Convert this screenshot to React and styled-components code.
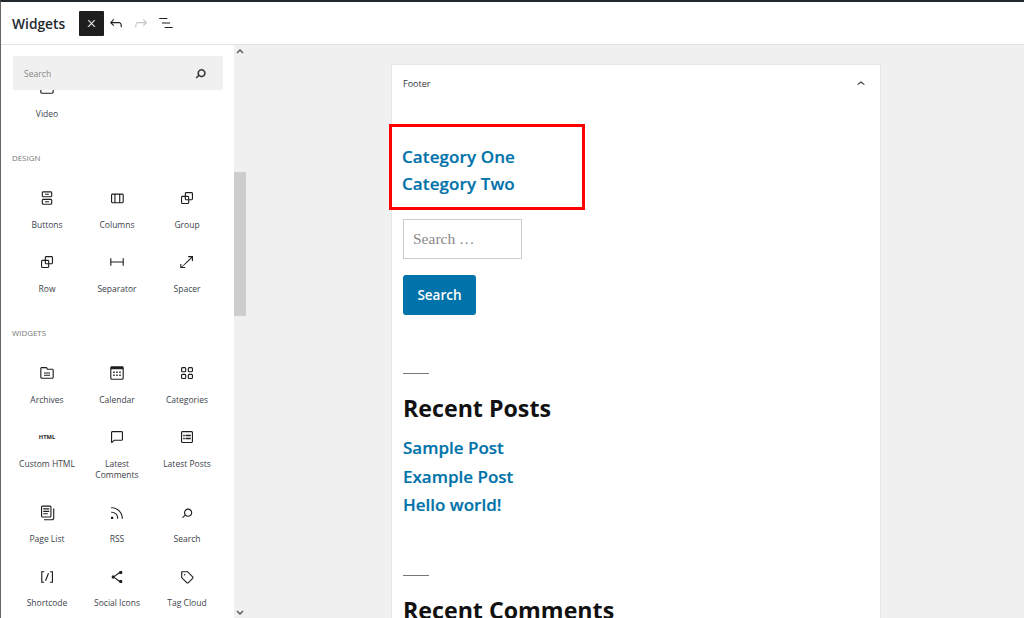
import React from "react";
import styled, { createGlobalStyle } from "styled-components";

const Global = createGlobalStyle`
  html, body { margin: 0; padding: 0; background: #fff; }
  body { font-family: "Open Sans", "Noto Sans", sans-serif; }
  * { box-sizing: border-box; }
`;

const Page = styled.div`
  position: relative;
  width: 1024px;
  height: 618px;
  overflow: hidden;
  display: flex;
  flex-direction: column;
  border-top: 2px solid #23282d;
  border-left: 1px solid #666;
  background: #fff;
  color: #1e1e1e;
`;
const EdgeMark = styled.div`
  position: absolute;
  left: -1px;
  top: ${(p) => p.$top}px;
  width: 1px;
  height: ${(p) => p.$h}px;
  background: #4aa3df;
`;
const Header = styled.header`
  flex: none;
  height: 43px;
  display: flex;
  align-items: center;
  padding-left: 11px;
  border-bottom: 1px solid #e4e4e4;
`;
const Title = styled.h1`
  margin: 0 27px 0 0;
  width: 40px;
  white-space: nowrap;
  font-size: 13.8px;
  font-weight: 600;
  color: #23282d;
`;
const CloseBtn = styled.button`
  width: 25px;
  height: 25px;
  margin-right: -1px;
  padding: 0;
  border: 0;
  border-radius: 1px;
  background: #1e1e1e;
  color: #fff;
  display: flex;
  align-items: center;
  justify-content: center;
  svg { stroke: currentColor; stroke-width: 1; }
`;
const ToolBtn = styled.button`
  width: 25px;
  height: 25px;
  padding: 0;
  border: 0;
  background: none;
  color: ${(p) => (p.$off ? "#c4c4c4" : "#1e1e1e")};
  display: flex;
  align-items: center;
  justify-content: center;
`;
const Body = styled.div`
  flex: 1;
  min-height: 0;
  display: flex;
`;
const Sidebar = styled.aside`
  flex: none;
  width: 233px;
  display: flex;
  flex-direction: column;
`;
const SearchWrap = styled.div`
  flex: none;
  padding: 11px 11px 0 12px;
`;
const SearchBox = styled.div`
  height: 34px;
  background: #f0f0f0;
  display: flex;
  align-items: center;
  justify-content: space-between;
  padding: 1px 14px 0 11px;
  font-size: 8.6px;
  color: #888;
  border-radius: 1px;
  svg { color: #1e1e1e; stroke: currentColor; stroke-width: 0.5; margin-top: -1px; }
`;
const ListClip = styled.div`
  flex: 1;
  min-height: 0;
  overflow: hidden;
`;
const List = styled.div`
  margin-top: -12px;
  padding: 0 11px;
`;
const Section = styled.section`
  margin-top: 33.5px;
`;
const SectionTitle = styled.h2`
  margin: 0 0 25.5px;
  height: 11px;
  line-height: 11px;
  font-size: 7.9px;
  font-weight: 400;
  color: #777;
  text-transform: uppercase;
`;
const Grid = styled.div`
  display: grid;
  grid-template-columns: repeat(3, 70px);
  row-gap: 23px;
`;
const Item = styled.div`
  width: 70px;
  display: flex;
  flex-direction: column;
  align-items: center;
  text-align: center;
`;
const IconBox = styled.div`
  width: 18px;
  height: 18px;
  margin-bottom: 11.5px;
  color: #1e1e1e;
  display: flex;
  align-items: center;
  justify-content: center;
`;
const HtmlTag = styled.span`
  font-size: 5.8px;
  font-weight: 700;
  line-height: 18px;
`;
const Label = styled.span`
  max-width: 58px;
  font-size: 8.5px;
  line-height: 11.5px;
  color: #3c434a;
`;
const Scrollbar = styled.div`
  flex: none;
  width: 12px;
  background: #f0f0f0;
  display: flex;
  flex-direction: column;
  align-items: center;
  color: #555;
`;
const ScrollArrow = styled.div`
  flex: none;
  height: 12px;
  width: 12px;
  display: flex;
  align-items: center;
  justify-content: center;
`;
const ScrollTrack = styled.div`
  flex: 1;
  width: 100%;
  padding-top: 115px;
`;
const ScrollThumb = styled.div`
  height: 144px;
  background: #cdcdcd;
`;
const Main = styled.main`
  flex: 1;
  min-width: 0;
  background: #f0f0f0;
  padding: 19px 0 0 145px;
  overflow: hidden;
`;
const Card = styled.div`
  width: 490px;
  min-height: 700px;
  background: #fff;
  border: 1px solid #e8e8e8;
  padding: 0 10px 0 11px;
`;
const CardHead = styled.div`
  height: 37px;
  display: flex;
  align-items: center;
  justify-content: space-between;
  padding-right: 1px;
  font-size: 9px;
  color: #333;
`;
const Highlight = styled.div`
  width: 196px;
  height: 86px;
  margin: 22px 0 9px -14px;
  padding: 16px 0 0 10px;
  border: 3px solid #f00;
`;
const BlockLink = styled.a`
  display: block;
  font-size: 17px;
  letter-spacing: ${(p) => p.$ls || 0}px;
  line-height: ${(p) => p.$lh || 27}px;
  font-weight: 600;
  -webkit-text-stroke: 0.2px #0073aa;
  color: #0073aa;
  text-decoration: none;
  white-space: nowrap;
`;
const SearchInput = styled.div`
  width: 119px;
  height: 40px;
  padding-left: 9px;
  border: 1px solid #ccc;
  font-family: "Liberation Serif", serif;
  font-size: 15.5px;
  line-height: 38px;
  color: #888;
`;
const SearchBtn = styled.button`
  display: block;
  width: 73px;
  height: 40px;
  margin-top: 16px;
  padding: 0;
  border: 0;
  border-radius: 3px;
  background: #0073aa;
  color: #fff;
  font-family: inherit;
  font-size: 13.5px;
  font-weight: 600;
`;
const Divider = styled.hr`
  width: 26px;
  height: 1px;
  margin: ${(p) => p.$mt}px 0 0;
  border: 0;
  background: #767676;
`;
const WidgetTitle = styled.h2`
  margin: 19px 0 11px;
  font-size: 23.2px;
  line-height: 30px;
  font-weight: 700;
  color: #111;
  white-space: nowrap;
`;

const Ico = ({ d, size = 18, rule }) => (
  <svg width={size} height={size} viewBox="0 0 24 24" fill="currentColor" aria-hidden="true">
    <path d={d} fillRule={rule} />
  </svg>
);
const P = {
  close: "M13 11.8l6.1-6.3-1-1-6.1 6.2-6.1-6.2-1 1 6.1 6.3-6.5 6.7 1 1 6.5-6.6 6.5 6.6 1-1z",
  undo: "M18.3 11.7c-.6-.6-1.4-.9-2.3-.9H6.7l2.9-3.3-1.1-1-4.5 5L8.5 16l1-1-2.7-2.7H16c.5 0 .9.2 1.3.5 1 1 1 3.4 1 4.5v.3h1.5v-.2c0-1.5 0-4.3-1.5-5.7z",
  redo: "M15.6 6.5l-1.1 1 2.9 3.3H8c-.9 0-1.7.3-2.3.9-1.4 1.5-1.4 4.2-1.4 5.6v.2h1.5v-.3c0-1.1 0-3.5 1-4.5.3-.3.7-.5 1.3-.5h9.2L14.5 15l1.1 1.1 4.6-4.6-4.6-5z",
  list: "M13.8 5.2H3v1.5h10.8V5.2zm-3.6 12v1.5H21v-1.5H10.2zm7.2-6H6.6v1.5h10.8v-1.5z",
  search: "M13.5 6C10.5 6 8 8.5 8 11.5c0 1.1.3 2.1.9 3l-3.4 3 1 1.1 3.4-2.9c1 .9 2.2 1.4 3.6 1.4 3 0 5.5-2.5 5.5-5.5C19 8.5 16.5 6 13.5 6zm0 9.5c-2.2 0-4-1.8-4-4s1.8-4 4-4 4 1.8 4 4-1.8 4-4 4z",
  chevronUp: "M6.5 12.4L12 8l5.5 4.4-.9 1.2L12 10l-4.5 3.6-1-1.2z",
  video: "M18.7 3H5.3C4 3 3 4 3 5.3v13.4C3 20 4 21 5.3 21h13.4c1.3 0 2.3-1 2.3-2.3V5.3C21 4 20 3 18.7 3zm.8 15.7c0 .4-.4.8-.8.8H5.3c-.4 0-.8-.4-.8-.8V5.3c0-.4.4-.8.8-.8h13.4c.4 0 .8.4.8.8v13.4zM10 15l5-3-5-3v6z",
  buttons: "M17 3H7c-1.1 0-2 .9-2 2v4c0 1.1.9 2 2 2h10c1.1 0 2-.9 2-2V5c0-1.1-.9-2-2-2zm.5 6c0 .3-.2.5-.5.5H7c-.3 0-.5-.2-.5-.5V5c0-.3.2-.5.5-.5h10c.3 0 .5.2.5.5v4zm-8-1.2h5V6.2h-5v1.6zM17 13H7c-1.1 0-2 .9-2 2v4c0 1.1.9 2 2 2h10c1.1 0 2-.9 2-2v-4c0-1.1-.9-2-2-2zm.5 6c0 .3-.2.5-.5.5H7c-.3 0-.5-.2-.5-.5v-4c0-.3.2-.5.5-.5h10c.3 0 .5.2.5.5v4zm-8-1.2h5v-1.5h-5v1.5z",
  columns: "M19 6H6c-1.1 0-2 .9-2 2v9c0 1.1.9 2 2 2h13c1.1 0 2-.9 2-2V8c0-1.1-.9-2-2-2zm-4.1 1.5v10H10v-10h4.9zM5.5 17V8c0-.3.2-.5.5-.5h2.5v10H6c-.3 0-.5-.2-.5-.5zm14 0c0 .3-.2.5-.5.5h-2.6v-10H19c.3 0 .5.2.5.5v9z",
  group: "M18 4h-7c-1.1 0-2 .9-2 2v3H6c-1.1 0-2 .9-2 2v7c0 1.1.9 2 2 2h7c1.1 0 2-.9 2-2v-3h3c1.1 0 2-.9 2-2V6c0-1.1-.9-2-2-2zm-4.5 14c0 .3-.2.5-.5.5H6c-.3 0-.5-.2-.5-.5v-7c0-.3.2-.5.5-.5h3V13c0 1.1.9 2 2 2h2.5v3zm0-4.5H11c-.3 0-.5-.2-.5-.5v-2.5H13c.3 0 .5.2.5.5v2.5zm5-.5c0 .3-.2.5-.5.5h-3V11c0-1.1-.9-2-2-2h-2.5V6c0-.3.2-.5.5-.5h7c.3 0 .5.2.5.5v7z",
  separator: "M3 7v10h1.5v-4.25h15V17H21V7h-1.5v4.25h-15V7H3z",
  spacer: "M13.5 4v1.5h4L11 12l1 1 6.5-6.5v4H20V4h-6.5zM12 13l-1-1-6.5 6.5v-4H3V20h6.5v-1.5h-4L12 13z",
  archive: "M19 6.2h-5.9l-.6-1.1c-.3-.7-1-1.1-1.8-1.1H5c-1.1 0-2 .9-2 2v11.8c0 1.1.9 2 2 2h14c1.1 0 2-.9 2-2V8.2c0-1.1-.9-2-2-2zm.5 11.6c0 .3-.2.5-.5.5H5c-.3 0-.5-.2-.5-.5V6c0-.3.2-.5.5-.5h5.6c.2 0 .4.1.4.3l1 2H19c.3 0 .5.2.5.5v9.5zM8 12.8h8v-1.5H8v1.5zm0 3h8v-1.5H8v1.5z",
  calendar: "M19 3H5c-1.1 0-2 .9-2 2v14c0 1.1.9 2 2 2h14c1.1 0 2-.9 2-2V5c0-1.1-.9-2-2-2zm.5 16c0 .3-.2.5-.5.5H5c-.3 0-.5-.2-.5-.5V7h15v12zM9 10H7v2h2v-2zm0 4H7v2h2v-2zm4-4h-2v2h2v-2zm4 0h-2v2h2v-2zm-4 4h-2v2h2v-2zm4 0h-2v2h2v-2z",
  categories: "M6 5.5h3a.5.5 0 01.5.5v3a.5.5 0 01-.5.5H6a.5.5 0 01-.5-.5V6a.5.5 0 01.5-.5zM4 6a2 2 0 012-2h3a2 2 0 012 2v3a2 2 0 01-2 2H6a2 2 0 01-2-2V6zm11-.5h3a.5.5 0 01.5.5v3a.5.5 0 01-.5.5h-3a.5.5 0 01-.5-.5V6a.5.5 0 01.5-.5zM13 6a2 2 0 012-2h3a2 2 0 012 2v3a2 2 0 01-2 2h-3a2 2 0 01-2-2V6zm5 8.5h-3a.5.5 0 00-.5.5v3a.5.5 0 00.5.5h3a.5.5 0 00.5-.5v-3a.5.5 0 00-.5-.5zM15 13a2 2 0 00-2 2v3a2 2 0 002 2h3a2 2 0 002-2v-3a2 2 0 00-2-2h-3zm-9 1.5h3a.5.5 0 01.5.5v3a.5.5 0 01-.5.5H6a.5.5 0 01-.5-.5v-3a.5.5 0 01.5-.5zM4 15a2 2 0 012-2h3a2 2 0 012 2v3a2 2 0 01-2 2H6a2 2 0 01-2-2v-3z",
  comment: "M18 4H6c-1.1 0-2 .9-2 2v12.9c0 .6.5 1.1 1.1 1.1.3 0 .5-.1.8-.3L8.5 17H18c1.1 0 2-.9 2-2V6c0-1.1-.9-2-2-2zm.5 11c0 .3-.2.5-.5.5H7.9l-2.4 2.4V6c0-.3.2-.5.5-.5h12c.3 0 .5.2.5.5v9z",
  postList: "M18 4H6c-1.1 0-2 .9-2 2v12c0 1.1.9 2 2 2h12c1.1 0 2-.9 2-2V6c0-1.1-.9-2-2-2zm.5 14c0 .3-.2.5-.5.5H6c-.3 0-.5-.2-.5-.5V6c0-.3.2-.5.5-.5h12c.3 0 .5.2.5.5v12zM7 11h2V9H7v2zm0 4h2v-2H7v2zm3-4h7V9h-7v2zm0 4h7v-2h-7v2z",
  pages: "M7 13.8h6v-1.5H7v1.5zM18 16V4c0-1.1-.9-2-2-2H6c-1.1 0-2 .9-2 2v12c0 1.1.9 2 2 2h10c1.1 0 2-.9 2-2zM5.5 16V4c0-.3.2-.5.5-.5h10c.3 0 .5.2.5.5v12c0 .3-.2.5-.5.5H6c-.3 0-.5-.2-.5-.5zM7 10.5h8V9H7v1.5zm0-3.3h8V5.8H7v1.4zM20.2 6v13c0 .7-.6 1.2-1.2 1.2H8v1.5h11c1.5 0 2.7-1.2 2.7-2.8V6h-1.5z",
  rss: "M5 10.2h-.8v1.5H5c1.9 0 3.8.8 5.1 2.1 1.4 1.4 2.1 3.2 2.1 5.1v.8h1.5V19c0-2.3-.9-4.5-2.6-6.2-1.6-1.6-3.8-2.6-6.1-2.6zm10.4-1.6C12.6 5.8 8.9 4.2 5 4.2h-.8v1.5H5c3.5 0 6.9 1.4 9.4 3.9s3.9 5.8 3.9 9.4v.8h1.5V19c0-3.9-1.6-7.6-4.4-10.4zM4 20h3v-3H4v3z",
  shortcode: "M16 4.2v1.5h2.5v12.5H16v1.5h4V4.2h-4zM4.2 19.8h4v-1.5H5.8V5.8h2.5V4.2h-4l-.1 15.6zm5.1-3.1l1.4.6 4-10-1.4-.6-4 10z",
  social: "M9 11.8l6.1-4.5c.1.4.4.7.9.7h2c.6 0 1-.4 1-1V5c0-.6-.4-1-1-1h-2c-.6 0-1 .4-1 1v.4l-6.4 4.8c-.2-.1-.4-.2-.6-.2H6c-.6 0-1 .4-1 1v2c0 .6.4 1 1 1h2c.2 0 .4-.1.6-.2l6.4 4.8v.4c0 .6.4 1 1 1h2c.6 0 1-.4 1-1v-2c0-.6-.4-1-1-1h-2c-.5 0-.8.3-.9.7L9 12.2v-.4z",
  tag: "M20.1 11.2l-6.7-6.7c-.1-.1-.3-.2-.5-.2H5c-.4-.1-.8.3-.8.7v7.8c0 .2.1.4.2.5l6.7 6.7c.2.2.5.4.7.5s.6.2.9.2c.3 0 .6-.1.9-.2.3-.1.5-.3.8-.5l5.6-5.6c.4-.4.7-1 .7-1.6.1-.6-.2-1.2-.6-1.6zM19 13.4L13.4 19c-.1.1-.2.1-.3.2-.2.1-.4.1-.6 0-.1 0-.2-.1-.3-.2l-6.5-6.5V5.8h6.8l6.5 6.5c.2.2.2.4.2.6 0 .1-.1.3-.2.5zM9 8c-.6 0-1 .4-1 1s.4 1 1 1 1-.4 1-1-.4-1-1-1z",
};

const Block = ({ icon, label, rule }) => (
  <Item>
    <IconBox>{icon === "html" ? <HtmlTag>HTML</HtmlTag> : <Ico d={P[icon]} rule={rule} />}</IconBox>
    <Label>{label}</Label>
  </Item>
);

const design = [
  ["buttons", "Buttons"], ["columns", "Columns"], ["group", "Group"],
  ["group", "Row"], ["separator", "Separator"], ["spacer", "Spacer"],
];
const widgets = [
  ["archive", "Archives"], ["calendar", "Calendar"], ["categories", "Categories", "evenodd"],
  ["html", "Custom HTML"], ["comment", "Latest Comments"], ["postList", "Latest Posts"],
  ["pages", "Page List"], ["rss", "RSS"], ["search", "Search"],
  ["shortcode", "Shortcode"], ["social", "Social Icons"], ["tag", "Tag Cloud"],
];

export default function App() {
  return (
    <Page>
      <Global />
      <EdgeMark $top={144} $h={8} />
      <EdgeMark $top={161} $h={7} />
      <Header>
        <Title>Widgets</Title>
        <CloseBtn aria-label="Close"><Ico d={P.close} size={11} /></CloseBtn>
        <ToolBtn aria-label="Undo"><Ico d={P.undo} size={18} /></ToolBtn>
        <ToolBtn $off aria-label="Redo"><Ico d={P.redo} size={18} /></ToolBtn>
        <ToolBtn aria-label="List view"><Ico d={P.list} size={18} /></ToolBtn>
      </Header>
      <Body>
        <Sidebar>
          <SearchWrap>
            <SearchBox>
              <span>Search</span>
              <Ico d={P.search} size={17} />
            </SearchBox>
          </SearchWrap>
          <ListClip>
            <List>
              <Block icon="video" label="Video" />
              <Section>
                <SectionTitle>Design</SectionTitle>
                <Grid>{design.map(([i, l]) => <Block key={l} icon={i} label={l} />)}</Grid>
              </Section>
              <Section>
                <SectionTitle>Widgets</SectionTitle>
                <Grid>{widgets.map(([i, l, r]) => <Block key={l} icon={i} label={l} rule={r} />)}</Grid>
              </Section>
            </List>
          </ListClip>
        </Sidebar>
        <Scrollbar>
          <ScrollArrow><svg width="8" height="5" viewBox="0 0 8 5"><path d="M1 4l3-3 3 3" fill="none" stroke="currentColor" strokeWidth="1.4" /></svg></ScrollArrow>
          <ScrollTrack><ScrollThumb /></ScrollTrack>
          <ScrollArrow><svg width="8" height="5" viewBox="0 0 8 5"><path d="M1 1l3 3 3-3" fill="none" stroke="currentColor" strokeWidth="1.4" /></svg></ScrollArrow>
        </Scrollbar>
        <Main>
          <Card>
            <CardHead>
              <span>Footer</span>
              <Ico d={P.chevronUp} size={16} />
            </CardHead>
            <Highlight>
              <BlockLink $ls={0.1}>Category One</BlockLink>
              <BlockLink $ls={0.1}>Category Two</BlockLink>
            </Highlight>
            <SearchInput>Search …</SearchInput>
            <SearchBtn>Search</SearchBtn>
            <Divider $mt={58} />
            <WidgetTitle>Recent Posts</WidgetTitle>
            <BlockLink $lh={28.5}>Sample Post</BlockLink>
            <BlockLink $lh={28.5}>Example Post</BlockLink>
            <BlockLink $lh={28.5}>Hello world!</BlockLink>
            <Divider $mt={55} />
            <WidgetTitle>Recent Comments</WidgetTitle>
          </Card>
        </Main>
      </Body>
    </Page>
  );
}
